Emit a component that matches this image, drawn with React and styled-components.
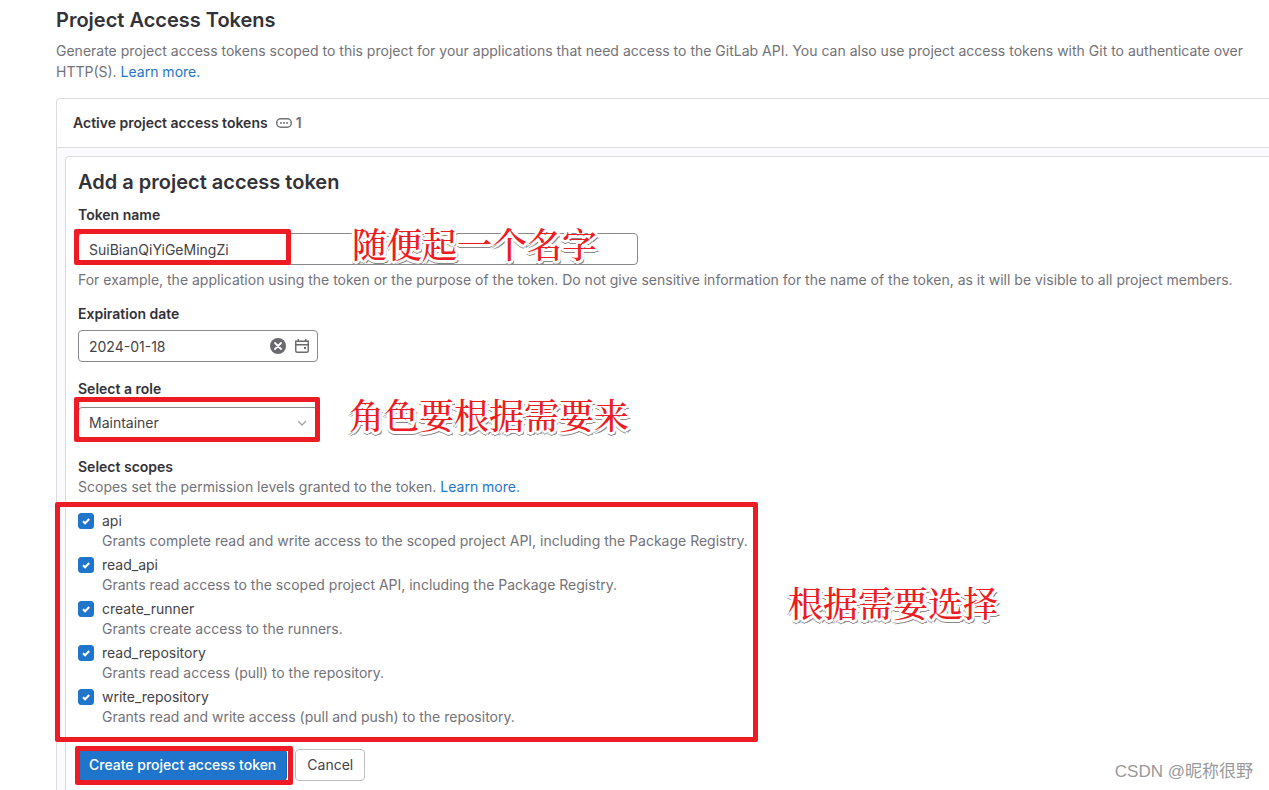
import styled, { createGlobalStyle } from 'styled-components';

const GlobalStyle = createGlobalStyle`
  * {
    box-sizing: border-box;
  }

  body {
    margin: 0;
    background: #fff;
    color: #333238;
    font-family: Inter, 'Noto Sans', sans-serif;
    font-size: 14px;
    line-height: 20px;
  }

  button,
  input,
  select {
    font: inherit;
  }
`;

const Page = styled.main`
  position: relative;
  display: flex;
  flex-direction: column;
  min-height: 100vh;
  padding: 8px 0 0 56px;
`;

const PageTitle = styled.h1`
  margin: 0;
  font-size: 20px;
  line-height: 24px;
  font-weight: 600;
`;

const Intro = styled.p`
  margin: 8px 24px 16px 0;
  line-height: 21px;
  color: #737278;
`;

const Link = styled.a`
  color: #1f75cb;
  text-decoration: none;
`;

const Card = styled.section`
  flex: 1;
  display: flex;
  flex-direction: column;
  border: 1px solid #dcdcde;
  border-width: 1px 0 0 1px;
  border-radius: 4px 0 0 0;
`;

const CardHeader = styled.header`
  display: flex;
  align-items: center;
  height: 49px;
  padding: 0 16px;
  border-bottom: 1px solid #dcdcde;
`;

const CardTitle = styled.h2`
  margin: 0 8px 0 0;
  font-size: 14px;
  line-height: 20px;
  font-weight: 600;
`;

const Count = styled.span`
  display: flex;
  align-items: center;
  gap: 4px;
  color: #737278;
  font-weight: 600;
`;

const CardBody = styled.div`
  flex: 1;
  display: flex;
  padding: 8px 0 0 8px;
  background: #fbfafd;
`;

const Form = styled.form`
  flex: 1;
  min-width: 0;
  padding: 12px 12px 8px;
  border: 1px solid #dcdcde;
  border-width: 1px 0 0 1px;
  border-radius: 4px 0 0 0;
  background: #fff;
`;

const FormTitle = styled.h3`
  margin: 0 0 10px;
  font-size: 20px;
  line-height: 26px;
  font-weight: 600;
`;

const Field = styled.div`
  margin-bottom: ${(props) => props.$gap || 17}px;
`;

const Label = styled.label`
  display: block;
  margin-bottom: ${(props) => props.$gap || 8}px;
  font-weight: 600;
`;

const Control = styled.div`
  position: relative;
  width: ${(props) => props.$width}px;
  max-width: 100%;
`;

const TextInput = styled.input`
  display: block;
  width: 100%;
  height: 32px;
  padding: 0 10px;
  border: 1px solid #89888d;
  border-radius: 4px;
  background: #fff;
  color: #434248;
`;

const Select = styled.select`
  display: block;
  width: 100%;
  height: 32px;
  padding: 0 32px 0 10px;
  border: 1px solid #89888d;
  border-radius: 4px;
  appearance: none;
  background: #fff;
  color: #434248;
`;

const ControlIcons = styled.span`
  position: absolute;
  top: 0;
  right: 8px;
  bottom: 0;
  display: flex;
  align-items: center;
  gap: 8px;
  color: #6a696f;
`;

const IconButton = styled.button`
  display: flex;
  padding: 0;
  border: 0;
  background: none;
  color: inherit;
`;

const Help = styled.p`
  margin: ${(props) => props.$top || 0}px 0 0;
  color: #737278;
`;

const ScopeTitle = styled.legend`
  padding: 0;
  line-height: 21px;
  font-weight: 600;
`;

const Scopes = styled.fieldset`
  min-width: 0;
  margin: 0;
  padding: 0;
  border: 0;
`;

const ScopeList = styled.div`
  position: relative;
  display: flex;
  flex-direction: column;
  gap: 4px;
  width: fit-content;
  margin: 14px 0 22px;
`;

const Scope = styled.div`
  display: flex;
  gap: 8px;
`;

const ScopeText = styled.label`
  display: block;
  color: #434248;

  small {
    display: block;
    font-size: 14px;
    color: #737278;
  }
`;

const CheckWrap = styled.span`
  position: relative;
  display: block;
  width: 16px;
  height: 16px;
  margin-top: 2px;

  svg {
    position: absolute;
    inset: 0;
    pointer-events: none;
  }
`;

const Checkbox = styled.input`
  display: block;
  width: 16px;
  height: 16px;
  margin: 0;
  border: 1px solid #89888d;
  border-radius: 3px;
  appearance: none;

  &:checked {
    border-color: #1f75cb;
    background: #1f75cb;
  }
`;

const Actions = styled.div`
  display: flex;
  gap: 8px;
`;

const ButtonWrap = styled.div`
  position: relative;
`;

const Button = styled.button`
  height: 32px;
  padding: 0 ${(props) => (props.$primary ? 10 : 11)}px;
  border: 1px solid ${(props) => (props.$primary ? '#1068bf' : '#bfbfc3')};
  border-radius: 4px;
  background: ${(props) => (props.$primary ? '#1f75cb' : '#fff')};
  color: ${(props) => (props.$primary ? '#fff' : '#434248')};
  font-weight: ${(props) => (props.$primary ? 500 : 400)};
`;

/* red frame drawn over a control */
const Frame = styled.span`
  position: absolute;
  top: ${(props) => props.$top}px;
  left: ${(props) => props.$left}px;
  width: ${(props) => props.$width}px;
  height: ${(props) => props.$height}px;
  border: ${(props) => props.$line || 5}px solid #ed1c24;
  border-radius: 2px;
  pointer-events: none;
`;

const Note = styled.span`
  position: absolute;
  top: ${(props) => props.$top}px;
  left: ${(props) => props.$left}px;
  color: #ed1c24;
  font-family: SimSun, 'Noto Serif CJK SC', 'Noto Sans CJK SC', serif;
  font-size: 35px;
  line-height: 40px;
  font-weight: 500;
  white-space: nowrap;
  pointer-events: none;
  text-shadow:
    3px 0 #fff,
    -3px 0 #fff,
    0 3px #fff,
    0 -3px #fff,
    2px 2px #fff,
    -2px 2px #fff,
    2px -2px #fff,
    -2px -2px #fff,
    3px 3px 0 #888,
    -2px 3px 0 #999,
    0 4px 0 #888;
`;

const Watermark = styled.span`
  position: absolute;
  right: 16px;
  bottom: 8px;
  color: #999;
  font-family: 'Liberation Sans', 'Noto Sans CJK SC', sans-serif;
  font-size: 17px;
  line-height: 20px;
`;

const scopes = [
  {
    name: 'api',
    help: 'Grants complete read and write access to the scoped project API, including the Package Registry.',
  },
  {
    name: 'read_api',
    help: 'Grants read access to the scoped project API, including the Package Registry.',
  },
  { name: 'create_runner', help: 'Grants create access to the runners.' },
  { name: 'read_repository', help: 'Grants read access (pull) to the repository.' },
  {
    name: 'write_repository',
    help: 'Grants read and write access (pull and push) to the repository.',
  },
];

function TokenIcon() {
  return (
    <svg width="16" height="16" viewBox="0 0 16 16" fill="none" aria-hidden="true">
      <rect x="0.75" y="3.75" width="14.5" height="8.5" rx="4" stroke="currentColor" strokeWidth="1.5" />
      <circle cx="5" cy="8" r="1" fill="currentColor" />
      <circle cx="8" cy="8" r="1" fill="currentColor" />
      <circle cx="11" cy="8" r="1" fill="currentColor" />
    </svg>
  );
}

function ClearIcon() {
  return (
    <svg width="16" height="16" viewBox="0 0 16 16" aria-hidden="true">
      <circle cx="8" cy="8" r="8" fill="currentColor" />
      <path d="M5 5l6 6M11 5l-6 6" stroke="#fff" strokeWidth="1.8" strokeLinecap="round" />
    </svg>
  );
}

function CalendarIcon() {
  return (
    <svg width="16" height="16" viewBox="0 0 16 16" fill="none" stroke="currentColor" strokeWidth="1.4" aria-hidden="true">
      <path d="M1.75 6.5v6.25a1.5 1.5 0 0 0 1.5 1.5h9.5a1.5 1.5 0 0 0 1.5-1.5V6.5M1 3.25h14M1 6.75h14M4.25 1v2.5M11.75 1v2.5M1.75 3v4M14.25 3v4" />
      <path d="M10 10h2" strokeWidth="2" />
    </svg>
  );
}

function ChevronIcon() {
  return (
    <svg width="16" height="16" viewBox="0 0 16 16" fill="none" aria-hidden="true">
      <path d="M4.5 6.5L8 10l3.5-3.5" stroke="#a4a3a8" strokeWidth="1.3" strokeLinecap="round" />
    </svg>
  );
}

function ScopeOption({ name, help }) {
  return (
    <Scope>
      <CheckWrap>
        <Checkbox type="checkbox" id={name} defaultChecked />
        <svg width="16" height="16" viewBox="0 0 16 16" fill="none" aria-hidden="true">
          <path d="M5 8.2l2.1 2.1L11.2 6" stroke="#fff" strokeWidth="2" />
        </svg>
      </CheckWrap>
      <ScopeText htmlFor={name}>
        {name}
        <small>{help}</small>
      </ScopeText>
    </Scope>
  );
}

export default function App() {
  return (
    <>
      <GlobalStyle />
      <Page>
        <PageTitle>Project Access Tokens</PageTitle>
        <Intro>
          Generate project access tokens scoped to this project for your applications that need
          access to the GitLab API. You can also use project access tokens with Git to authenticate
          over HTTP(S). <Link href="#">Learn more.</Link>
        </Intro>
        <Card>
          <CardHeader>
            <CardTitle>Active project access tokens</CardTitle>
            <Count>
              <TokenIcon />1
            </Count>
          </CardHeader>
          <CardBody>
            <Form onSubmit={(e) => e.preventDefault()}>
              <FormTitle>Add a project access token</FormTitle>
              <Field $gap={14}>
                <Label htmlFor="token-name">Token name</Label>
                <Control $width={560}>
                  <TextInput id="token-name" defaultValue="SuiBianQiYiGeMingZi" />
                  <Frame $top={-4} $left={-4} $width={217} $height={36} />
                  <Note $top={-10} $left={274}>
                    随便起一个名字
                  </Note>
                </Control>
                <Help $top={5}>
                  For example, the application using the token or the purpose of the token. Do not
                  give sensitive information for the name of the token, as it will be visible to
                  all project members.
                </Help>
              </Field>
              <Field>
                <Label htmlFor="expires" $gap={6}>
                  Expiration date
                </Label>
                <Control $width={240}>
                  <TextInput id="expires" defaultValue="2024-01-18" />
                  <ControlIcons>
                    <IconButton type="button" aria-label="Clear date">
                      <ClearIcon />
                    </IconButton>
                    <CalendarIcon />
                  </ControlIcons>
                </Control>
              </Field>
              <Field>
                <Label htmlFor="role">Select a role</Label>
                <Control $width={240}>
                  <Select id="role" defaultValue="Maintainer">
                    <option>Maintainer</option>
                  </Select>
                  <ControlIcons>
                    <ChevronIcon />
                  </ControlIcons>
                  <Frame $top={-10} $left={-4} $width={246} $height={45} />
                  <Note $top={-13} $left={271}>
                    角色要根据需要来
                  </Note>
                </Control>
              </Field>
              <Scopes>
                <ScopeTitle>Select scopes</ScopeTitle>
                <Help>
                  Scopes set the permission levels granted to the token.{' '}
                  <Link href="#">Learn more.</Link>
                </Help>
                <ScopeList>
                  {scopes.map((scope) => (
                    <ScopeOption key={scope.name} {...scope} />
                  ))}
                  <Frame $top={-9} $left={-23} $width={703} $height={240} />
                  <Note $top={71} $left={710}>
                    根据需要选择
                  </Note>
                </ScopeList>
              </Scopes>
              <Actions>
                <ButtonWrap>
                  <Button type="submit" $primary>
                    Create project access token
                  </Button>
                  <Frame $top={-3} $left={-3} $width={218} $height={39} />
                </ButtonWrap>
                <Button type="button">Cancel</Button>
              </Actions>
            </Form>
          </CardBody>
        </Card>
        <Watermark>CSDN @昵称很野</Watermark>
      </Page>
    </>
  );
}
